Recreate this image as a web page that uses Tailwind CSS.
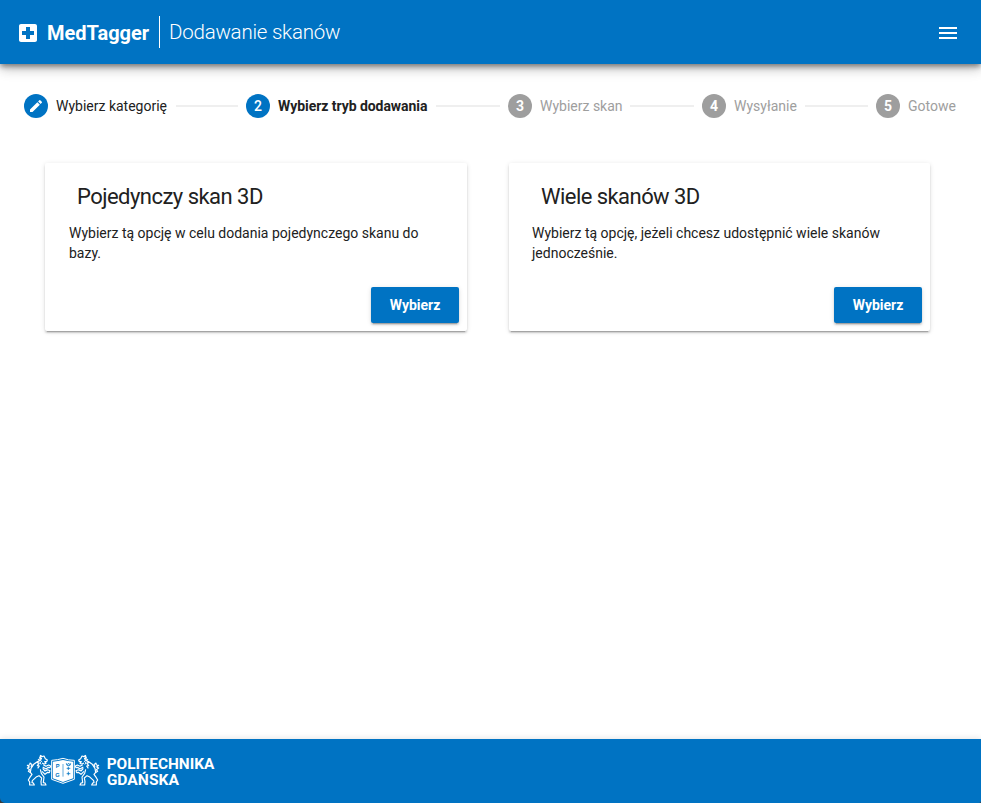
<!DOCTYPE html>
<html lang="pl">
<head>
<meta charset="utf-8">
<title>MedTagger</title>
<script src="https://cdn.jsdelivr.net/npm/@tailwindcss/browser@4"></script>
</head>
<body class="h-[803px] overflow-hidden flex flex-col bg-white font-['Roboto',sans-serif] text-[#212121]">
<header class="relative z-10 h-16 shrink-0 bg-[#0073c3] text-white flex items-center pl-4 pr-[21px] shadow-[0_3px_5px_-1px_rgba(0,0,0,.2),0_6px_10px_0_rgba(0,0,0,.14),0_1px_18px_0_rgba(0,0,0,.12),0_2px_6px_rgba(0,0,0,.3)]">
  <svg class="w-6 h-6 mt-0.5" viewBox="0 0 24 24" fill="currentColor"><path d="M19 3H5c-1.1 0-2 .9-2 2v14c0 1.1.9 2 2 2h14c1.1 0 2-.9 2-2V5c0-1.1-.9-2-2-2zm-1 11h-4v4h-4v-4H6v-4h4V6h4v4h4v4z"/></svg>
  <div class="ml-[7px] w-[112px] h-8 leading-[34px] text-[20px] font-bold whitespace-nowrap">MedTagger</div>
  <div class="h-8 pl-[9px] border-l border-white leading-8 text-[20.500px] tracking-[-.23px] font-light whitespace-nowrap">Dodawanie skanów</div>
  <svg class="w-6 h-6 ml-auto mt-0.5" viewBox="0 0 24 24" fill="currentColor"><path d="M3 18h18v-2H3v2zm0-5h18v-2H3v2zm0-7v2h18V6H3z"/></svg>
</header>
<main class="grow">
  <nav class="h-[84px] px-6 flex items-center gap-2 text-[14px] leading-6 whitespace-nowrap">
    <span class="size-6 shrink-0 rounded-full bg-[#0073c3] text-white flex items-center justify-center"><svg class="size-4" viewBox="0 0 24 24" fill="currentColor"><path d="M3 17.250V21h3.750L17.810 9.940l-3.750-3.750L3 17.250zM20.710 7.040a1 1 0 0 0 0-1.410l-2.340-2.340a1 1 0 0 0-1.410 0l-1.830 1.830 3.750 3.750 1.830-1.830z"/></svg></span>
    <span class="w-[112px] shrink-0">Wybierz kategorię</span>
    <span class="h-0.5 w-[62px] bg-[#efefef]"></span>
    <span class="size-6 shrink-0 rounded-full bg-[#0073c3] text-white text-center font-medium">2</span>
    <span class="w-[150px] shrink-0 font-bold tracking-[-.05px]">Wybierz tryb dodawania</span>
    <span class="h-0.5 w-16 bg-[#efefef]"></span>
    <span class="size-6 shrink-0 rounded-full bg-[#9e9e9e] text-white text-center font-bold">3</span>
    <span class="w-[82px] shrink-0 text-[#9e9e9e]">Wybierz skan</span>
    <span class="h-0.5 grow bg-[#efefef]"></span>
    <span class="size-6 shrink-0 rounded-full bg-[#9e9e9e] text-white text-center font-bold">4</span>
    <span class="w-[63px] shrink-0 text-[#9e9e9e]">Wysyłanie</span>
    <span class="h-0.5 w-[63px] bg-[#efefef]"></span>
    <span class="size-6 shrink-0 rounded-full bg-[#9e9e9e] text-white text-center font-bold">5</span>
    <span class="w-[49px] shrink-0 text-[#9e9e9e]">Gotowe</span>
  </nav>
  <div class="mt-[15px] ml-[45px] mr-[51px] grid grid-cols-[422px_421px] gap-[42px]">
    <section class="h-[168px] p-2 flex flex-col rounded-[2px] shadow-[0_3px_1px_-2px_rgba(0,0,0,.2),0_2px_2px_0_rgba(0,0,0,.14),0_1px_5px_0_rgba(0,0,0,.12)]">
      <h2 class="mt-2 ml-6 text-[22px] leading-9 tracking-[-.53px]">Pojedynczy skan 3D</h2>
      <p class="mt-2 mx-4 text-[14px] leading-5">Wybierz tą opcję w celu dodania pojedynczego skanu do<br>bazy.</p>
      <button class="mt-auto self-end w-[88px] h-9 rounded-[2px] bg-[#0073c3] text-white text-[14px] font-bold shadow-[0_3px_1px_-2px_rgba(0,0,0,.2),0_2px_2px_0_rgba(0,0,0,.14),0_1px_5px_0_rgba(0,0,0,.12)]">Wybierz</button>
    </section>
    <section class="h-[168px] p-2 flex flex-col rounded-[2px] shadow-[0_3px_1px_-2px_rgba(0,0,0,.2),0_2px_2px_0_rgba(0,0,0,.14),0_1px_5px_0_rgba(0,0,0,.12)]">
      <h2 class="mt-2 ml-6 text-[22px] leading-9 tracking-[-.55px]">Wiele skanów 3D</h2>
      <p class="mt-2 ml-[15px] mr-4 text-[14px] leading-5">Wybierz tą opcję, jeżeli chcesz udostępnić wiele skanów<br>jednocześnie.</p>
      <button class="mt-auto self-end w-[88px] h-9 rounded-[2px] bg-[#0073c3] text-white text-[14px] font-bold shadow-[0_3px_1px_-2px_rgba(0,0,0,.2),0_2px_2px_0_rgba(0,0,0,.14),0_1px_5px_0_rgba(0,0,0,.12)]">Wybierz</button>
    </section>
  </div>
</main>
<footer class="h-16 shrink-0 bg-[#3a3a3a] shadow-[0_-1px_6px_rgba(0,0,0,.1)]">
 <div class="h-16 rounded-bl-[5px] rounded-br-[2px] bg-[#0073c3] text-white flex pl-5 pt-1.5">
  <svg class="w-[200px] h-[50px]" viewBox="0 0 600 150" fill="none" stroke="#fff" stroke-width="3.500" stroke-linejoin="round">
    <defs>
      <g id="lion">
        <path d="M60 31l6 4 6-2 4 8 6 4-2 5-6 0 4 5-6 2-6-3"/>
        <path d="M64 31l-5 6 4 2-8 5 4 3-7 6 5 2-5 7 6 1-5 7"/>
        <path d="M59 38l7 3-6 4 5 4-6 5 5 4" stroke-width="3"/>
        <path d="M70 59l8 5 8-4 6 3-2 5-5-1-7 5-10-6M68 70l7 8 8-4 7 3-2 6-5-1-8 6-9-9"/>
        <path d="M54 49l-13 9-8 12-2 12 5 6-7 10-4 7 4 6v9h14l-3-6-4-1 1-6 13-12 7-3 8 7-2 11 1 10h14l-3-6-5-1 2-17-8-11-3-12"/>
        <path d="M32 83l-7-4 4-5-7-5 6-3-6-5 7-1 1-6 6 5-3 7"/>
      </g>
    </defs>
    <use href="#lion"/>
    <use href="#lion" transform="translate(258 0) scale(-1 1)"/>
    <path d="M93 45q18 0 36-7q18 7 36 7v60l-36 13-36-13z" fill="#0073c3" stroke="none"/>
    <path d="M95 46q18-1 34-6q16 6 34 6v57l-34 12-34-12z" stroke-width="3"/>
    <path d="M98.500 50q15-1 30.500-5q15 4 30.500 5v50l-30.500 11-30.500-11z" fill="#fff" stroke="none"/>
    <path d="M129 57v38" stroke="#65abdc" stroke-width="3"/>
    <g stroke="none" fill="#0073c3" class="font-['Liberation_Sans',sans-serif] font-bold" font-size="17"><text x="107" y="70">P</text><text x="106" y="95">G</text></g>
    <path d="M139 56l2 5h9l2-5-4 2-2-3-3 3zM145 65v10M140 70h11M145 80v11M140 86h11" stroke="#0073c3" stroke-width="2.500"/>
    <g stroke="none" fill="#fff" class="font-['Roboto',sans-serif] font-bold" font-size="44">
      <text x="260" y="71" textLength="323" lengthAdjust="spacingAndGlyphs">POLITECHNIKA</text>
      <text x="260" y="120" textLength="217" lengthAdjust="spacingAndGlyphs">GDAŃSKA</text>
    </g>
  </svg>
 </div>
</footer>
</body>
</html>
